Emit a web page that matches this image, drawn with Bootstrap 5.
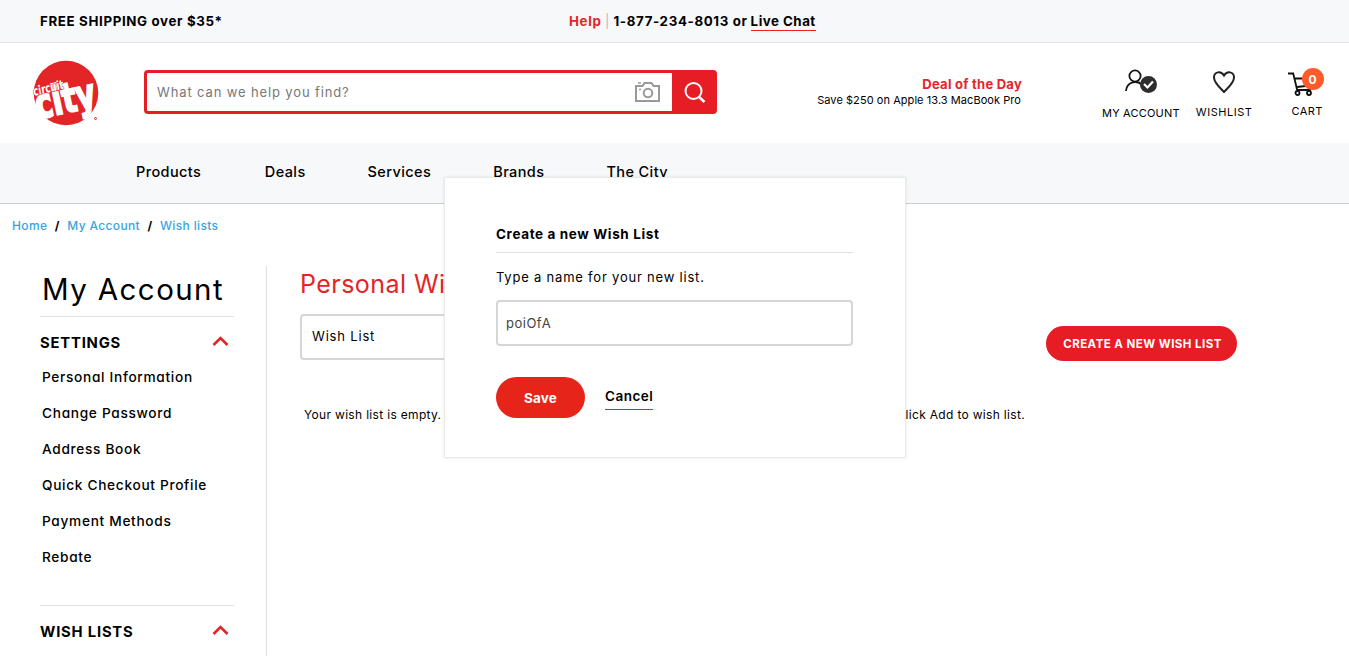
<!DOCTYPE html>
<html lang="en">
<head>
<meta charset="utf-8">
<title>My Account - Wish lists</title>
<meta name="viewport" content="width=device-width, initial-scale=1">
<link href="https://cdn.jsdelivr.net/npm/bootstrap@5.3.0/dist/css/bootstrap.min.css" rel="stylesheet">
<style>
body{font-family:Inter,"Open Sans","Liberation Sans",sans-serif;color:#000;font-size:13px;line-height:20px;height:656px;overflow:hidden}
a{color:inherit;text-decoration:none}
.soft{background:#f7f8fa}
.red{color:#e42527}
.topbar{height:43px;border-bottom:1px solid #e1e2e5;font-weight:700;font-size:13.3px;letter-spacing:.65px;padding-left:40px}
.ship{width:529px}
.bar{color:#bbb;font-weight:400;width:12px}
.live{border-bottom:1px solid #e42527;line-height:18px;letter-spacing:.5px;margin-left:3px}
.masthead{height:100px;padding-left:33px}
.search{width:573px;height:44px;margin:27px 0 0 44px;border:3px solid #e71d25;border-radius:4px;background:#e71d25}
.search input{border:0;border-radius:1px 0 0 1px;font-size:13px;padding:0 10px;letter-spacing:.87px}
.search input::placeholder{color:#777}
.search .cam{background:#fff;width:37px}
.search .go{width:42px;padding-left:3px!important}
.deal{width:206px;margin:33px 0 0 99px;line-height:16px}
.deal strong{font-size:13px;font-weight:700;letter-spacing:.25px}
.deal small{font-size:11px;letter-spacing:.06px;padding-right:1px}
.tool{font-size:11px;line-height:14px;letter-spacing:.2px}
.count{left:14px;top:-4px;width:22px;height:22px;background:#ff5a2b;color:#fff;font:700 12px/24px Inter,sans-serif}
.mainnav{height:61px;border-bottom:1px solid #c9cbce;font-size:14.5px;font-weight:500;letter-spacing:.4px;padding:19px 0 0 136px;gap:62px}
.crumbs{padding:12px 0 0 12px;font-size:12px;font-weight:500;letter-spacing:.35px;height:62px}
.crumbs a{color:#3aa4dc}
.crumbs b{width:20px;text-align:center}
.side{width:267px;height:391px;border-right:1px solid #dfe0e1;padding:0 32px 0 40px}
.side h1{font-size:29.500px;line-height:46px;height:51px;font-weight:400;letter-spacing:1.4px;margin:0;padding-left:2px;border-bottom:1px solid #dfe0e1}
.side h2{font-size:14.8px;font-weight:700;letter-spacing:.8px;margin:0;line-height:20px}
.side .grp{padding:16px 5px 0 0}
.side .grp svg{margin-top:-3px}
.side nav a{height:36px;font-size:13.7px;font-weight:500;letter-spacing:.68px;font-feature-settings:"cv11";padding-left:2px}
.content{padding:0 112px 0 33px}
.content h2{font-size:25px;font-weight:400;letter-spacing:.45px;line-height:36px;height:34px;margin:0}
.picker{width:400px;height:46px;border:2px solid #d5d6d7;border-radius:4px;padding:10px;margin-top:14px;letter-spacing:.82px}
.pill{background:#e71d25;color:#fff;border-radius:20px;font-weight:700}
.pill:hover{background:#cf171e;color:#fff}
.new{width:191px;height:35px;font-size:11.5px;letter-spacing:.45px;margin-top:60px;padding:2px 0 0 2px}
.empty{width:725px;padding-left:4px;font-size:12px;letter-spacing:.32px;margin-top:44px}
.dialog{position:absolute;left:444px;top:177px;width:462px;height:281px;background:#fff;border:1px solid #e9eaea;box-shadow:0 0 3px rgba(0,0,0,.1);padding:46px 52px 0 51px}
.dialog h3{font-size:13.5px;font-weight:700;letter-spacing:.62px;line-height:20px;height:29px;margin:0 0 14px;border-bottom:1px solid #dfe0e1}
.dialog label{letter-spacing:.79px}
.dialog input{height:46px;border:2px solid #d5d6d7;border-radius:4px;font-size:13px;letter-spacing:.5px;color:#444;padding:0 8px;margin-top:13px}
.save{width:89px;height:41px;font-size:13.5px;letter-spacing:.2px;background:#e62419;border-radius:21px;padding-top:2px}
.cancel{font-weight:600;font-size:13.5px;letter-spacing:.5px;border-bottom:1px solid #e42527;height:24px;margin-top:9px}
</style>
</head>
<body class="bg-white position-relative">
<div class="topbar soft d-flex align-items-center">
  <span class="ship">FREE SHIPPING over $35*</span>
  <a class="red" href="#">Help</a><span class="bar text-center">|</span>
  <span>1-877-234-8013 or</span><a class="live" href="#">Live Chat</a>
</div>
<header class="masthead d-flex align-items-start">
  <a href="#" aria-label="Circuit City"><svg class="d-block overflow-visible" width="67" height="68" viewBox="33 60 67 68" style="margin-top:17px">
    <circle cx="66" cy="93" r="32.3" fill="#e42527"/>
    <g fill="#fff" font-family="DejaVu Sans Condensed, DejaVu Sans, sans-serif" font-weight="700">
      <text transform="translate(38 119) rotate(-12) scale(1 1.25)" font-size="33" stroke="#fff" stroke-width="1.500" textLength="61" lengthAdjust="spacingAndGlyphs">city</text>
      <text transform="translate(34 96) rotate(-14) skewX(-4)" font-size="12.500" stroke="#e42527" stroke-width="1" paint-order="stroke" textLength="31" lengthAdjust="spacingAndGlyphs">circuit</text>
    </g><circle cx="95.500" cy="118.500" r="1" fill="none" stroke="#e42527"/>
  </svg></a>
  <form class="search d-flex align-items-stretch">
    <input class="flex-fill" placeholder="What can we help you find?" aria-label="Search">
    <span class="cam d-flex align-items-center"><svg width="25" height="22" viewBox="0 0 25 22" fill="none" stroke="#999" stroke-width="2"><path d="M1 5h6.500l2-3h7l2 3H24v15H1z"/><circle cx="13" cy="12" r="4.300"/><path d="M3 2h3M4 8.500h2" stroke-width="1.500"/></svg></span>
    <button type="button" class="go btn p-0 border-0" aria-label="Go"><svg width="22" height="22" viewBox="0 0 22 22" fill="none" stroke="#fff" stroke-width="2"><circle cx="9.500" cy="9" r="8"/><path d="M15 15l5.500 5" stroke-width="2.600"/></svg></button>
  </form>
  <div class="deal text-end d-flex flex-column align-items-end"><strong class="red">Deal of the Day</strong><small>Save $250 on Apple 13.3 MacBook Pro</small></div>
  <a class="tool d-flex flex-column" style="margin:26px 0 0 80px" href="#"><svg width="34" height="26" viewBox="0 0 34 26" fill="none" stroke="#161616" stroke-width="1.800" style="margin-left:23px"><circle cx="10" cy="7" r="5.600"/><path d="M.9 22c1-10 12-11 16-6"/><circle cx="23.500" cy="15.500" r="8.500" fill="#2d2d2d" stroke="none"/><path d="M19 15l3.500 3.500 5.500-6" stroke="#fff" stroke-width="2.200"/></svg><span style="margin-top:11px">MY ACCOUNT</span></a>
  <a class="tool d-flex flex-column align-items-center" style="margin:28px 0 0 16px" href="#"><svg width="22" height="22" viewBox="0 0 22 22" fill="none" stroke="#222" stroke-width="2" style="margin-right:1px"><path d="M11 21C7 16.500 1 12 1 6.500C1 .5 8-.5 11 4.500C14-.5 21 .5 21 6.500C21 12 15 16.500 11 21z"/></svg><span style="margin-top:12px;letter-spacing:.55px">WISHLIST</span></a>
  <a class="tool position-relative" style="margin:29px 0 0 35px" href="#"><svg class="d-block" width="26" height="25" viewBox="0 0 26 25" fill="none" stroke="#111" stroke-width="1.800"><path d="M0 1.500h5.200l4 16.500H23M7 6.500h15M9 15l13-1.500"/><circle cx="9.500" cy="21" r="2"/><circle cx="21" cy="21" r="2"/></svg><b class="count position-absolute rounded-circle text-center">0</b><span class="d-block" style="margin:7px 0 0 4px;letter-spacing:.4px">CART</span></a>
</header>
<nav class="mainnav soft d-flex"><a href="#" style="margin-right:1.500px">Products</a><a href="#">Deals</a><a href="#">Services</a><a href="#">Brands</a><a href="#">The City</a></nav>
<div class="crumbs d-flex"><a href="#">Home</a><b>/</b><a href="#">My Account</a><b>/</b><a href="#">Wish lists</a></div>
<main class="d-flex">
  <aside class="side flex-shrink-0">
    <h1>My Account</h1>
    <div class="grp d-flex align-items-center justify-content-between"><h2>SETTINGS</h2><svg width="17" height="11" viewBox="0 0 17 11" fill="none" stroke="#e42527" stroke-width="2.600"><path d="M1.500 9L8.500 2l7 7"/></svg></div>
    <nav class="d-flex flex-column" style="padding-top:14px;height:252px"><a href="#">Personal Information</a><a href="#">Change Password</a><a href="#">Address Book</a><a href="#">Quick Checkout Profile</a><a href="#">Payment Methods</a><a href="#">Rebate</a></nav>
    <div class="grp d-flex align-items-center justify-content-between border-top"><h2>WISH LISTS</h2><svg width="17" height="11" viewBox="0 0 17 11" fill="none" stroke="#e42527" stroke-width="2.600"><path d="M1.500 9L8.500 2l7 7"/></svg></div>
  </aside>
  <section class="content flex-fill">
    <div class="d-flex justify-content-between align-items-start"><div><h2 class="red">Personal Wish Lists</h2><div class="picker">Wish List</div></div><button class="btn pill new">CREATE A NEW WISH LIST</button></div>
    <p class="empty d-flex justify-content-between"><span>Your wish list is empty.</span><span>Go to a product page and click Add to wish list.</span></p>
  </section>
</main>
<div class="dialog" role="dialog">
  <h3>Create a new Wish List</h3>
  <label class="d-block">Type a name for your new list.</label>
  <input class="w-100" value="poiOfA" aria-label="List name">
  <div class="d-flex align-items-start" style="margin-top:31px;gap:20px"><button class="btn pill save pb-0">Save</button><a class="cancel" href="#">Cancel</a></div>
</div>
<script src="https://cdn.jsdelivr.net/npm/bootstrap@5.3.0/dist/js/bootstrap.bundle.min.js"></script>
</body>
</html>
